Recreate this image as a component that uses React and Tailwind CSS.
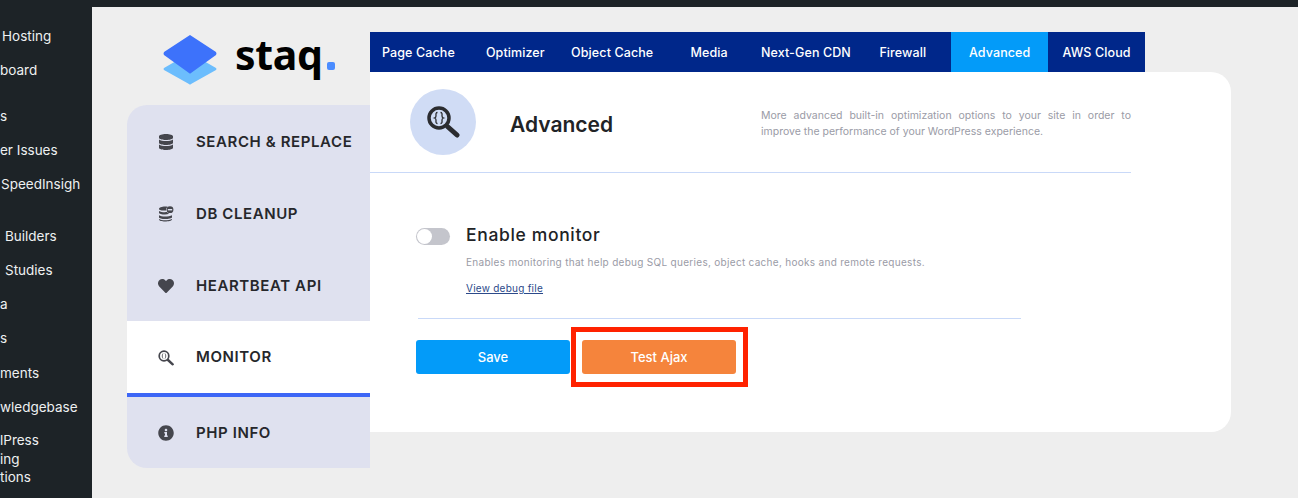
import React from 'react';
import { FaDatabase, FaHeart, FaInfoCircle } from 'react-icons/fa';

const wpRows = [
  { text: 'Hosting', pad: 'pl-[2px]', gap: 'mt-0' },
  { text: 'board', pad: 'pl-0', gap: 'mt-0' },
  { text: 's', pad: 'pl-0', gap: 'mt-[11px]' },
  { text: 'er Issues', pad: 'pl-0', gap: 'mt-0' },
  { text: 'SpeedInsigh', pad: 'pl-[1px]', gap: 'mt-0' },
  { text: 'Builders', pad: 'pl-[5px]', gap: 'mt-[17px]' },
  { text: 'Studies', pad: 'pl-[5px]', gap: 'mt-0' },
  { text: 'a', pad: 'pl-0', gap: 'mt-0' },
  { text: 's', pad: 'pl-0', gap: 'mt-0' },
  { text: 'ments', pad: 'pl-0', gap: 'mt-0' },
  { text: 'wledgebase', pad: 'pl-0', gap: 'mt-0' },
];

const tabs = ['Page Cache', 'Optimizer', 'Object Cache', 'Media', 'Next-Gen CDN', 'Firewall', 'Advanced', 'AWS Cloud'];

const DbCleanIcon = () => (
  <svg width="16" height="16" viewBox="0 0 16 16" fill="#45464d">
    <path d="M1 3c0-1.400 2.800-2.500 6-2.500 1 0 1.900.1 2.700.3A4.200 4.200 0 0 0 8 4.500c-.3 0-.7.100-1 .1C3.800 4.600 1 4.400 1 3Z" />
    <path d="M1 5c1.200 1 3.600 1.200 6 1.200.6 0 1.300 0 1.900-.1.500.8 1.300 1.400 2.200 1.700C9.900 8.300 8.500 8.500 7 8.500 3.800 8.500 1 7.800 1 6.700Z" />
    <path d="M1 9.300C2.200 10.200 4.600 10.600 7 10.600s5.800-.400 7-1.300v1.900c0 1.100-3.800 1.900-7 1.900S1 12.300 1 11.200Z" />
    <path d="M1 13c1.200.900 3.600 1.300 6 1.300s5.800-.400 7-1.300v.6c0 1.300-3.800 2-7 2s-6-.700-6-2Z" />
    <circle cx="12" cy="3.700" r="3.400" />
    <rect x="9.800" y="3" width="4.400" height="1.400" fill="#dfe1ef" />
  </svg>
);

const MonitorIcon = () => (
  <svg width="16" height="16" viewBox="0 0 16 16" fill="none" stroke="#45464d">
    <circle cx="6" cy="6" r="4.800" strokeWidth="1.700" />
    <path d="M5 3.500c-1 1.500-1 3.500 0 5M7 3.500c1 1.500 1 3.500 0 5" strokeWidth="0.800" />
    <path d="M10 10l4.700 4.300" strokeWidth="2.400" strokeLinecap="round" />
  </svg>
);

const navItems = [
  { label: 'SEARCH & REPLACE', icon: <FaDatabase size={16} color="#45464d" />, cls: 'h-[72px] pt-[2px]' },
  { label: 'DB CLEANUP', icon: <DbCleanIcon />, cls: 'h-[72px] pt-[2px]' },
  { label: 'HEARTBEAT API', icon: <FaHeart size={16} color="#45464d" />, cls: 'h-[72px] pt-[2px]' },
  { label: 'MONITOR', icon: <MonitorIcon />, cls: 'h-[76px] pt-[1px] bg-white border-b-4 border-[#3d66f6]' },
  { label: 'PHP INFO', icon: <FaInfoCircle size={16} color="#45464d" />, cls: 'h-[71px] pt-[1px]' },
];

const Logo = () => (
  <div className="h-[98px] flex items-start pl-[36px] pt-[28px]">
    <svg width="54" height="50" viewBox="0 0 54 50" className="shrink-0">
      <path d="M27 18 L53 33 Q54 34 53 35 L28 49 Q27 50 26 49 L1 35 Q0 34 1 33 Z" fill="#6cbdfd" />
      <path d="M27 0 L53 17 Q54 19 53 20 L28 38 Q27 39 26 38 L1 20 Q0 19 1 17 Z" fill="#3d72fb" />
    </svg>
    <span className="ml-[18px] -mt-[4px] text-[41px] leading-[46px] font-bold text-black font-['Noto_Sans',sans-serif] tracking-[-0.3px]">staq</span>
    <span className="ml-[4px] mt-[27px] w-[8px] h-[8px] rounded-[2px] bg-[#4a8cff]"></span>
  </div>
);

const SideNav = () => (
  <div className="w-[243px] rounded-l-[20px] bg-[#dfe1ef] overflow-hidden flex flex-col">
    {navItems.map((item) => (
      <div key={item.label} className={`flex items-center pl-[31px] shrink-0 ${item.cls}`}>
        <span className="w-[16px] flex justify-center shrink-0">{item.icon}</span>
        <span className="ml-[22px] text-[15px] font-semibold text-[#26272b] whitespace-nowrap tracking-[0.6px]">{item.label}</span>
      </div>
    ))}
  </div>
);

const MagnifierBadge = () => (
  <div className="w-[66px] h-[66px] rounded-full bg-[#d0dcf5] flex items-center justify-center shrink-0">
    <svg width="34" height="34" viewBox="0 0 34 34" fill="none" stroke="#2b2c30">
      <circle cx="13" cy="13" r="10" strokeWidth="3.500" />
      <path d="M22 22 L31 30" strokeWidth="5" strokeLinecap="round" />
      <path d="M11.500 7.500c-2 0-1.500 2-1.500 3.500s-1.500 2-1.500 2 1.500.5 1.500 2-.5 3.500 1.500 3.500M14.500 7.500c2 0 1.500 2 1.500 3.500s1.500 2 1.500 2-1.500.5-1.500 2 .5 3.500-1.500 3.500" strokeWidth="1.300" />
    </svg>
  </div>
);

export default function App() {
  return (
    <div className="w-[1298px] h-[498px] overflow-hidden flex flex-col bg-[#1d2327] font-['Inter',sans-serif]">
      <div className="h-[7px] shrink-0"></div>
      <div className="flex flex-1 min-h-0">
        {/* WP admin menu, cut off on the left */}
        <div className="w-[92px] shrink-0 overflow-hidden pt-[12px] text-[13.500px] text-[#eef0f1] whitespace-nowrap">
          {wpRows.map((row, i) => (
            <div key={i} className={`h-[34.300px] flex items-center ${row.pad} ${row.gap}`}>{row.text}</div>
          ))}
          <div className="mt-[7px] leading-[18.500px]">
            <div>lPress</div>
            <div>ing</div>
            <div>tions</div>
          </div>
        </div>

        <div className="flex-1 bg-[#eeeeee] flex pl-[35px]">
          <div className="w-[243px] shrink-0 flex flex-col">
            <Logo />
            <SideNav />
          </div>

          <div className="w-[861px] pt-[25px] flex flex-col">
            <div className="w-[775px] h-[40px] grid grid-cols-8 bg-[#00278a]">
              {tabs.map((tab) => (
                <div
                  key={tab}
                  className={`flex items-center justify-center pt-[2px] text-[12.500px] font-medium text-white whitespace-nowrap tracking-[0.1px] ${tab === 'Advanced' ? 'bg-[#039bf9]' : ''}`}
                >
                  {tab}
                </div>
              ))}
            </div>

            <div className="h-[360px] bg-white rounded-r-[20px] rounded-bl-none">
              <div className="w-[761px] h-[101px] border-b border-[#c9d9f8] flex pl-[40px] pt-[17px]">
                <MagnifierBadge />
                <div className="ml-[34px] mt-[23px] text-[21px] leading-[26px] font-semibold text-[#212326]">Advanced</div>
                <p className="ml-auto w-[370px] mt-[19px] text-[10.500px] leading-[16px] text-[#9a9ba6] text-justify">
                  More advanced built-in optimization options to your site in order to improve the performance of your WordPress experience.
                </p>
              </div>

              <div className="pl-[46px] pt-[52px]">
                <div className="flex items-center h-[22px]">
                  <div className="w-[34px] h-[17px] rounded-full bg-[#c4c5cc] flex items-center pl-[1px]">
                    <div className="w-[15px] h-[15px] rounded-full bg-white"></div>
                  </div>
                  <span className="ml-[16px] pb-[2px] text-[17.500px] font-medium text-[#212326] tracking-[0.65px]">Enable monitor</span>
                </div>
                <p className="ml-[50px] mt-[8px] text-[10px] leading-[14px] text-[#9a9ba6] tracking-[0.3px]">
                  Enables monitoring that help debug SQL queries, object cache, hooks and remote requests.
                </p>
                <a className="block ml-[50px] mt-[12px] text-[10px] leading-[14px] text-[#2c4a8a] underline tracking-[0.25px]">View debug file</a>
                <div className="w-[603px] ml-[2px] mt-[23px] border-t border-[#c9d9f8]"></div>
                <div className="relative flex gap-[12px] mt-[21px]">
                  <button className="w-[154px] h-[34px] pt-[1px] rounded-[3px] bg-[#039bf9] text-white text-[13px] font-medium">Save</button>
                  <button className="w-[154px] h-[34px] pt-[1px] rounded-[3px] bg-[#f5843c] text-white text-[13px] font-medium">Test Ajax</button>
                  {/* red annotation round the Test Ajax button */}
                  <div className="absolute left-[155px] top-[-13px] w-[177px] h-[60px] border-[5px] border-[#ff2200]"></div>
                </div>
              </div>
            </div>
          </div>
        </div>
      </div>
    </div>
  );
}
